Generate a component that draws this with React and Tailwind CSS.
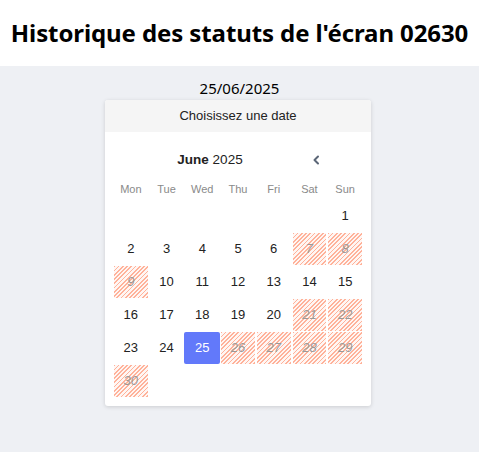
import React from 'react';

const hatch =
  'bg-[image:repeating-linear-gradient(135deg,#ffb29a_0px,#ffb29a_1.2px,#fff6f3_1.2px,#fff6f3_3px)] text-[#9a9a9a]';

const weekdays = ['Mon', 'Tue', 'Wed', 'Thu', 'Fri', 'Sat', 'Sun'];
const disabled = [7, 8, 9, 21, 22, 26, 27, 28, 29, 30];

function ChevronLeft() {
  return (
    <svg width="8" height="10" viewBox="0 0 8 10" fill="none">
      <path d="M6 1.5L2.5 5L6 8.5" stroke="#5b6677" strokeWidth="2" strokeLinecap="round" strokeLinejoin="round" />
    </svg>
  );
}

export default function App() {
  // June 2025 starts on a Sunday
  const cells = [];
  for (let i = 0; i < 6; i++) cells.push(null);
  for (let d = 1; d <= 30; d++) cells.push(d);

  return (
    <div className="min-h-[452px] w-[479px] bg-[#eef0f4] font-['Noto_Sans',sans-serif]">
      {/* Page title */}
      <div className="bg-white h-[66px] flex items-center justify-center">
        <h1 className="text-[24px] font-bold text-black tracking-[-0.1px]">
          Historique des statuts de l'écran 02630
        </h1>
      </div>

      <div className="flex flex-col items-center pt-[11px] pr-[3px]">
        <div className="text-[15px] text-black leading-[22px] pl-[3px]">25/06/2025</div>

        {/* Date picker popup */}
        <div className="w-[266px] bg-white rounded-[3px] shadow-[0_1px_4px_rgba(0,0,0,0.15)] mt-[1px] overflow-hidden font-['Liberation_Sans',Arial,sans-serif]">
          <div className="h-[32px] bg-[#f5f5f5] flex items-center justify-center text-[13px] text-[#222]">
            Choisissez une date
          </div>

          <div className="px-2 pb-[9px]">
            <div className="flex items-center h-[28px] mt-[14px]">
              <div className="w-[194px] text-center text-[13.5px] text-[#222]">
                <span className="font-bold">June</span> 2025
              </div>
              <div className="w-[18px] flex justify-center">
                <ChevronLeft />
              </div>
            </div>

            <div className="grid grid-cols-7 mt-[4px]">
              {weekdays.map((w) => (
                <div key={w} className="h-[22px] flex items-center justify-center text-[11px] text-[#8a8a8a]">
                  {w}
                </div>
              ))}
            </div>

            <div className="grid grid-cols-7 gap-y-[1px]">
              {cells.map((d, i) => {
                if (d === null) return <div key={i} className="h-[32px]" />;
                const isSel = d === 25;
                const isDis = disabled.includes(d);
                let cls = 'text-[#222]';
                if (isSel) cls = 'bg-[#6279fa] text-white rounded-[2px]';
                else if (isDis) cls = hatch;
                return (
                  <div
                    key={i}
                    className={`h-[32px] flex items-center justify-center text-[13px] ${isSel ? 'mx-0' : 'mx-[1px]'} ${cls}`}
                  >
                    <span className={isDis ? 'italic' : ''}>{d}</span>
                  </div>
                );
              })}
            </div>
          </div>
        </div>
      </div>
    </div>
  );
}
